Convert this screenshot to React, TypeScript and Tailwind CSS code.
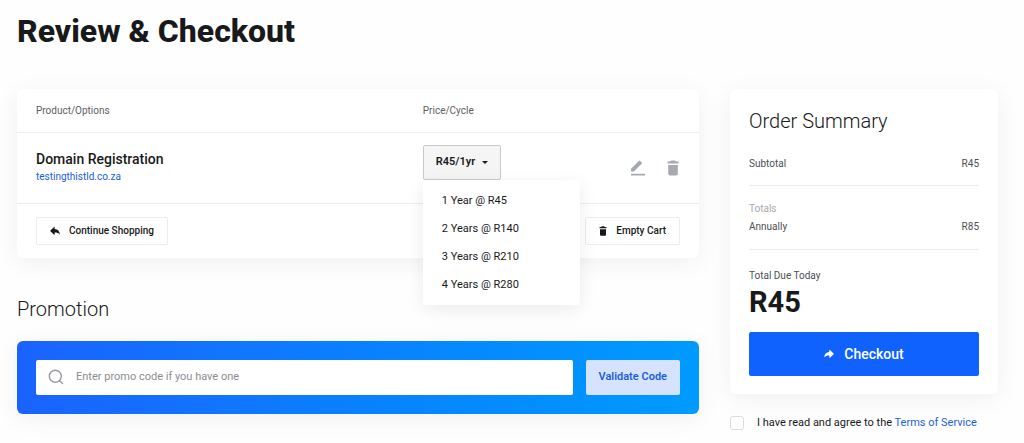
import { ReactNode, useState } from 'react';

const cycles = [
  { label: '1 Year @ R45', short: 'R45/1yr' },
  { label: '2 Years @ R140', short: 'R140/2yr' },
  { label: '3 Years @ R210', short: 'R210/3yr' },
  { label: '4 Years @ R280', short: 'R280/4yr' },
];

const TrashIcon = ({ className }: { className?: string }) => (
  <svg viewBox="0 0 12 16" fill="currentColor" className={className} aria-hidden="true">
    <path d="M3.400 1.100Q4 .5 4.600 .5h2.800q.6 0 1.200.6l.6.5H11.500v1.900H.5v-1.900h2.300z" />
    <path d="M1.200 5h9.600v8.800q0 1.700-1.700 1.700H2.900q-1.700 0-1.700-1.700z" />
  </svg>
);

const EditIcon = ({ className }: { className?: string }) => (
  <svg viewBox="0 0 16 16" fill="currentColor" className={className} aria-hidden="true">
    <path d="M1 11.600V8.700L8.900.9q.6-.6 1.200 0l1.600 1.600q.6.6 0 1.200l-7.900 7.900z" />
    <path d="M1 13.800h14v1.700H1z" />
  </svg>
);

const ReplyIcon = ({ className }: { className?: string }) => (
  <svg viewBox="0 0 12 10" fill="currentColor" className={className} aria-hidden="true">
    <path d="M5.600.5v2.100c3.800.1 6 2.500 6.200 6.800-1.500-1.900-3.400-2.500-6.200-2.500v2.200q0 .8-.7.3L.5 5.300q-.5-.5 0-1L4.900.2q.7-.5.700.3z" />
  </svg>
);

const SearchIcon = ({ className }: { className?: string }) => (
  <svg
    viewBox="0 0 16 16"
    fill="none"
    stroke="currentColor"
    strokeWidth="1.4"
    strokeLinecap="round"
    className={className}
    aria-hidden="true"
  >
    <circle cx="7.300" cy="7.300" r="6" />
    <path d="M11.700 11.700l2.800 2.800" />
  </svg>
);

const OutlineButton = ({ icon, children }: { icon: ReactNode; children: ReactNode }) => (
  <button
    type="button"
    className="flex h-7 items-center gap-[9px] rounded-xs border border-[#ececec] bg-white px-[13px] font-medium"
  >
    {icon}
    {children}
  </button>
);

const SummaryRow = ({ label, value }: { label: string; value: string }) => (
  <div className="flex justify-between leading-4">
    <dt>{label}</dt>
    <dd>{value}</dd>
  </div>
);

const CycleDropdown = () => {
  const [open, setOpen] = useState(true);
  const [selected, setSelected] = useState(cycles[0]);

  return (
    <div className="relative text-[11px]">
      <button
        type="button"
        aria-haspopup="menu"
        aria-expanded={open}
        onClick={() => setOpen(!open)}
        className="flex h-[35px] items-center gap-[7px] rounded-xs border border-[#c9c9c9] bg-[#f5f5f5] px-3 font-semibold"
      >
        {selected.short}
        <svg viewBox="0 0 6 3" fill="currentColor" className="h-[3px] w-1.5" aria-hidden="true">
          <path d="M0 0h6L3 3z" />
        </svg>
      </button>
      {open && (
        <ul
          role="menu"
          className="absolute top-full left-0 z-10 w-[157px] rounded-xs bg-white pt-2 pb-[5px] shadow-[0_4px_18px_rgba(0,0,0,0.08)]"
        >
          {cycles.map((cycle) => (
            <li key={cycle.label} role="none">
              <button
                type="button"
                role="menuitem"
                onClick={() => {
                  setSelected(cycle);
                  setOpen(false);
                }}
                className="block h-7 w-full px-[19px] text-left hover:bg-gray-50"
              >
                {cycle.label}
              </button>
            </li>
          ))}
        </ul>
      )}
    </div>
  );
};

const App = () => {
  const [promo, setPromo] = useState('');
  const [agreed, setAgreed] = useState(false);

  return (
    <div className="min-h-screen bg-[#fefefe] pt-3 pr-[26px] pl-[17px] font-['Roboto',sans-serif] text-[#18191b]">
      <h1 className="text-[32px] leading-[38px] font-extrabold">Review &amp; Checkout</h1>

      <div className="mt-[39px] flex items-start gap-[31px]">
        <main className="min-w-0 flex-1">
          <section className="rounded-md bg-white text-[10px] shadow-[0_4px_24px_rgba(0,0,0,0.06)]">
            <table className="w-full table-fixed text-left">
              <thead>
                <tr className="h-[43px] border-b border-[#f0f0f0] text-[#5b5e63]">
                  <th className="w-[59.5%] pl-[19px] font-normal">Product/Options</th>
                  <th className="font-normal">Price/Cycle</th>
                  <th className="w-[90px]" aria-label="Actions" />
                </tr>
              </thead>
              <tbody>
                <tr className="h-[71px] border-b border-[#ececec]">
                  <td className="pl-[19px]">
                    <p className="text-sm leading-[18px] font-medium">Domain Registration</p>
                    <a href="#domain" className="block leading-[18px] text-[#1a5ee0]">
                      testingthistld.co.za
                    </a>
                  </td>
                  <td className="pt-3 align-top">
                    <CycleDropdown />
                  </td>
                  <td className="pr-5">
                    <div className="flex justify-end gap-[21px] text-[#a7a9b0]">
                      <button type="button" aria-label="Edit">
                        <EditIcon className="size-4" />
                      </button>
                      <button type="button" aria-label="Remove">
                        <TrashIcon className="h-4 w-3" />
                      </button>
                    </div>
                  </td>
                </tr>
              </tbody>
            </table>
            <div className="flex justify-between px-[19px] py-[13px]">
              <OutlineButton icon={<ReplyIcon className="size-2.5" />}>Continue Shopping</OutlineButton>
              <OutlineButton icon={<TrashIcon className="h-2.5 w-2" />}>Empty Cart</OutlineButton>
            </div>
          </section>

          <h2 className="mt-[37px] text-xl leading-7 font-light">Promotion</h2>
          <form
            onSubmit={(e) => e.preventDefault()}
            className="mt-[18px] flex gap-[13px] rounded-md bg-linear-to-r from-[#1a62ff] to-[#009bff] p-[19px] text-[11px] shadow-[0_4px_24px_rgba(0,0,0,0.06)]"
          >
            <label className="flex h-[35px] flex-1 items-center gap-3 rounded-xs bg-white px-3">
              <SearchIcon className="size-4 text-[#97999d]" />
              <input
                type="text"
                aria-label="Promo code"
                value={promo}
                onChange={(e) => setPromo(e.target.value)}
                placeholder="Enter promo code if you have one"
                className="flex-1 outline-none placeholder:text-[#8b8d91]"
              />
            </label>
            <button
              type="submit"
              className="h-[35px] rounded-xs bg-[#d6e3ff] px-[13px] font-semibold text-[#1a5ee0]"
            >
              Validate Code
            </button>
          </form>
        </main>

        <aside className="w-[268px]">
          <section className="rounded-md bg-white px-[19px] pt-[18px] pb-[18px] shadow-[0_4px_24px_rgba(0,0,0,0.06)]">
            <h2 className="text-xl leading-7 font-light">Order Summary</h2>
            <dl className="text-[10px] text-[#4c4f54]">
              <div className="border-b border-[#ececec] pt-[21px] pb-[13px]">
                <SummaryRow label="Subtotal" value="R45" />
              </div>
              <div className="border-b border-[#ececec] pt-[15px] pb-3.5">
                <p className="pb-0.5 leading-4 text-[#a7a9ad]">Totals</p>
                <SummaryRow label="Annually" value="R85" />
              </div>
              <div className="pt-[18px]">
                <dt className="leading-4">Total Due Today</dt>
                <dd className="text-[29px] leading-9 font-bold text-[#18191b]">R45</dd>
              </div>
            </dl>
            <button
              type="button"
              className="mt-3 flex h-11 w-full items-center justify-center gap-2.5 rounded-xs bg-[#1062fe] text-sm font-medium text-white"
            >
              <ReplyIcon className="size-2.5 -scale-x-100" />
              Checkout
            </button>
          </section>
          <div className="mt-[21px] flex items-center gap-[13px] text-[11px]">
            <input
              id="terms"
              type="checkbox"
              checked={agreed}
              onChange={(e) => setAgreed(e.target.checked)}
              className="size-3.5 appearance-none rounded-[3px] border border-[#dcdcdc] bg-white checked:bg-[#1062fe]"
            />
            <label htmlFor="terms" className="leading-4">
              I have read and agree to the{' '}
              <a href="#terms-of-service" className="text-[#1a5ee0]">
                Terms of Service
              </a>
            </label>
          </div>
        </aside>
      </div>
    </div>
  );
};

export default App;
